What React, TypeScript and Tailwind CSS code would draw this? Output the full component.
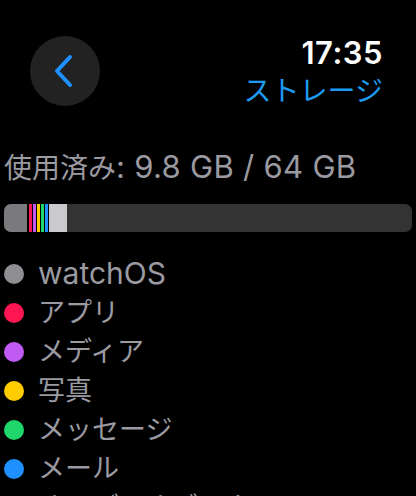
const legend = [
  { label: "watchOS", color: "bg-[#8e8e93]", latin: true },
  { label: "アプリ", color: "bg-[#ff1551]" },
  { label: "メディア", color: "bg-[#bf5af2]" },
  { label: "写真", color: "bg-[#ffcc00]" },
  { label: "メッセージ", color: "bg-[#1fd66b]" },
  { label: "メール", color: "bg-[#1e90ff]" },
  { label: "オーディオブック", color: "bg-[#8e8e93]" },
];

export default function App() {
  return (
    <div
      className="w-[416px] h-[496px] overflow-hidden bg-black text-white"
      style={{ fontFamily: 'Inter, "Noto Sans CJK JP", sans-serif' }}
    >
      <div className="flex justify-between items-start pl-[30px] pr-[33px] pt-[36px]">
        <button className="w-[70px] h-[70px] rounded-full bg-[#222222] flex items-center justify-center">
          <svg width="24" height="34" viewBox="0 0 24 34" className="mr-[2px]">
            <path d="M18 3 L5 17 L18 31" fill="none" stroke="#1e90ff" strokeWidth="4" strokeLinecap="round" strokeLinejoin="round" />
          </svg>
        </button>
        <div className="flex flex-col items-end">
          <div className="text-[31px] leading-[34px] font-semibold tracking-[0.5px]">17:35</div>
          <div className="text-[28px] leading-[34px] text-[#1e9bf0] mt-[4px]">ストレージ</div>
        </div>
      </div>

      <div className="px-[4px] mt-[41px]">
        <div className="text-[28px] leading-[36px] text-[#9a9aa0] whitespace-nowrap">
          使用済み<span className="text-[31px] tracking-[0.3px]">: 9.8 GB / 64 GB</span>
        </div>
        <div className="mt-[18px] h-[28px] rounded-[7px] bg-[#333333] overflow-hidden flex">
          <div className="w-[23px] bg-[#7a7a7e]" />
          <div className="w-[2px] bg-black" />
          <div className="w-[3px] bg-[#ff1551]" />
          <div className="w-[1px] bg-black" />
          <div className="w-[3px] bg-[#bf5af2]" />
          <div className="w-[1px] bg-black" />
          <div className="w-[3px] bg-[#ffcc00]" />
          <div className="w-[1px] bg-black" />
          <div className="w-[3px] bg-[#1fd66b]" />
          <div className="w-[1px] bg-black" />
          <div className="w-[3px] bg-[#1e90ff]" />
          <div className="w-[1px] bg-black" />
          <div className="w-[18px] bg-[#c9c9ce]" />
        </div>
      </div>

      <div className="mt-[22px] flex flex-col">
        {legend.map((item) => (
          <div key={item.label} className="flex items-center h-[39px] pl-[4px]">
            <div className={`w-[20px] h-[20px] rounded-full ${item.color}`} />
            <div
              className={`ml-[14px] text-[#9a9aa0] leading-[39px] ${item.latin ? "text-[30px]" : "text-[27px]"}`}
            >
              {item.label}
            </div>
          </div>
        ))}
      </div>
    </div>
  );
}
